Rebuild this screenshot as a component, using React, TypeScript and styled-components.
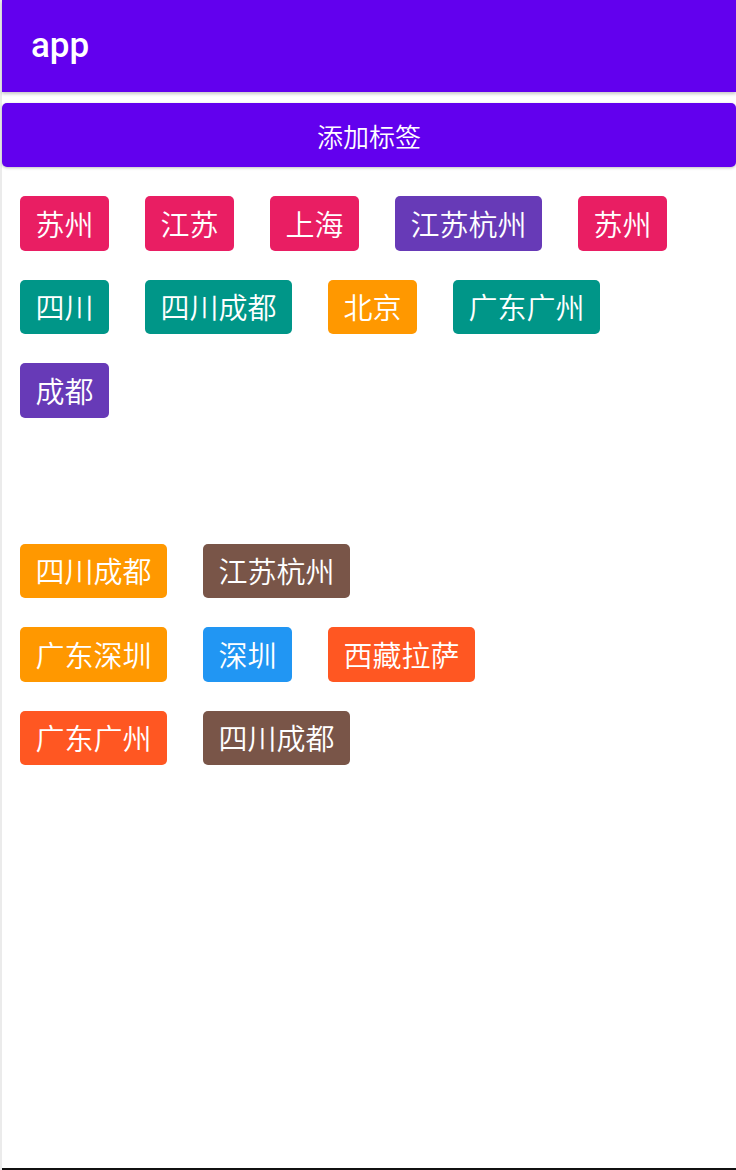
import React from 'react'
import styled, { createGlobalStyle } from 'styled-components'

const GlobalStyle = createGlobalStyle`
  html, body {
    margin: 0;
    padding: 0;
    background: #ffffff;
  }
  * {
    box-sizing: border-box;
  }
`

const Screen = styled.div`
  width: 736px;
  height: 1170px;
  padding-left: 2px;
  background-color: #ebebeb;
  display: flex;
  overflow: hidden;
`

const Page = styled.div`
  flex: 1;
  display: flex;
  flex-direction: column;
  background-color: #ffffff;
  border-bottom: 2px solid #111;
`

const AppBar = styled.header`
  height: 92px;
  flex-shrink: 0;
  display: flex;
  align-items: center;
  padding-left: 29px;
  padding-bottom: 2px;
  background-color: #6200ee;
  color: #ffffff;
  font-family: Roboto, 'Noto Sans', sans-serif;
  font-size: 35px;
  font-weight: 500;
  box-shadow: 0 2px 3px rgba(0, 0, 0, 0.22);
  position: relative;
  z-index: 1;
`

const AddButton = styled.button`
  margin-top: 11px;
  height: 64px;
  width: 100%;
  flex-shrink: 0;
  border: none;
  border-radius: 5px;
  background-color: #6200ee;
  color: #ffffff;
  font-family: 'Noto Sans CJK SC', sans-serif;
  font-size: 26px;
  font-weight: 350;
  box-shadow: 0 1px 3px rgba(0, 0, 0, 0.25);
`

const TagGroup = styled.div<{ $width?: number; $top: number }>`
  display: flex;
  flex-wrap: wrap;
  align-content: flex-start;
  column-gap: 36px;
  row-gap: 29px;
  padding: 0 18px;
  margin-top: ${p => p.$top}px;
  width: ${p => (p.$width ? `${p.$width}px` : '100%')};
`

const Tag = styled.span<{ $color: string }>`
  height: 54.5px;
  display: inline-flex;
  align-items: center;
  padding: 0 15.5px;
  border-radius: 5px;
  background-color: ${p => p.$color};
  color: #ffffff;
  font-family: 'Noto Sans CJK SC', sans-serif;
  font-size: 29px;
  font-weight: 350;
  line-height: 1;
  white-space: nowrap;
`

const PINK = '#e91e63'
const PURPLE = '#673ab7'
const TEAL = '#009688'
const ORANGE = '#ff9800'
const BROWN = '#795548'
const BLUE = '#2196f3'
const DEEP_ORANGE = '#ff5722'

const firstTags = [
  { text: '苏州', color: PINK },
  { text: '江苏', color: PINK },
  { text: '上海', color: PINK },
  { text: '江苏杭州', color: PURPLE },
  { text: '苏州', color: PINK },
  { text: '四川', color: TEAL },
  { text: '四川成都', color: TEAL },
  { text: '北京', color: ORANGE },
  { text: '广东广州', color: TEAL },
  { text: '成都', color: PURPLE }
]

const secondTags = [
  { text: '四川成都', color: ORANGE },
  { text: '江苏杭州', color: BROWN },
  { text: '广东深圳', color: ORANGE },
  { text: '深圳', color: BLUE },
  { text: '西藏拉萨', color: DEEP_ORANGE },
  { text: '广东广州', color: DEEP_ORANGE },
  { text: '四川成都', color: BROWN }
]

const App = () => {
  return (
    <>
      <GlobalStyle />
      <Screen>
        <Page>
          <AppBar>app</AppBar>
          <AddButton>添加标签</AddButton>
          <TagGroup $top={29}>
            {firstTags.map((tag, i) => (
              <Tag key={i} $color={tag.color}>{tag.text}</Tag>
            ))}
          </TagGroup>
          <TagGroup $top={126} $width={520}>
            {secondTags.map((tag, i) => (
              <Tag key={i} $color={tag.color}>{tag.text}</Tag>
            ))}
          </TagGroup>
        </Page>
      </Screen>
    </>
  )
}

export default App
